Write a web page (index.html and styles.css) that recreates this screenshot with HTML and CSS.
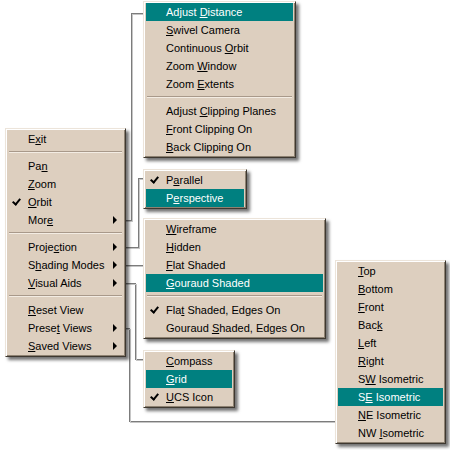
FILE: index.html
```html
<!DOCTYPE html>
<html>
<head>
<meta charset="utf-8">
<link rel="stylesheet" href="styles.css">
</head>
<body>
<div class="canvas">
  <svg class="wires" width="450" height="450" viewBox="0 0 450 450">
    <g class="dark">
      <polyline points="124,220 131,220 131,13 144,13"/>
      <polyline points="124,247 138,247 138,178 144,178"/>
      <polyline points="124,265 144,265"/>
      <polyline points="124,283 135,283 135,359 144,359"/>
      <polyline points="124,328 129,328 129,421 336,421"/>
    </g>
    <g class="light">
      <polyline points="124,221 132,221 132,14 144,14"/>
      <polyline points="124,248 139,248 139,179 144,179"/>
      <polyline points="124,266 144,266"/>
      <polyline points="124,284 136,284 136,360 144,360"/>
      <polyline points="124,329 130,329 130,422 336,422"/>
    </g>
  </svg>

  <div class="menu m-main">
    <div class="item"><span>E<u>x</u>it</span></div>
    <div class="sep"></div>
    <div class="item"><span>Pa<u>n</u></span></div>
    <div class="item"><span><u>Z</u>oom</span></div>
    <div class="item checked"><span><u>O</u>rbit</span></div>
    <div class="item sub"><span>Mor<u>e</u></span></div>
    <div class="sep"></div>
    <div class="item sub"><span>Proje<u>c</u>tion</span></div>
    <div class="item sub"><span>S<u>h</u>ading Modes</span></div>
    <div class="item sub"><span><u>V</u>isual Aids</span></div>
    <div class="sep"></div>
    <div class="item"><span><u>R</u>eset View</span></div>
    <div class="item sub"><span>Prese<u>t</u> Views</span></div>
    <div class="item sub"><span><u>S</u>aved Views</span></div>
  </div>

  <div class="menu m-more">
    <div class="item active"><span>Adjust <u>D</u>istance</span></div>
    <div class="item"><span><u>S</u>wivel Camera</span></div>
    <div class="item"><span>Continuous <u>O</u>rbit</span></div>
    <div class="item"><span>Zoom <u>W</u>indow</span></div>
    <div class="item"><span>Zoom <u>E</u>xtents</span></div>
    <div class="sep"></div>
    <div class="item"><span>Adjust <u>C</u>lipping Planes</span></div>
    <div class="item"><span><u>F</u>ront Clipping On</span></div>
    <div class="item"><span><u>B</u>ack Clipping On</span></div>
  </div>

  <div class="menu m-proj">
    <div class="item checked"><span>P<u>a</u>rallel</span></div>
    <div class="item active"><span>P<u>e</u>rspective</span></div>
  </div>

  <div class="menu m-shade">
    <div class="item"><span><u>W</u>ireframe</span></div>
    <div class="item"><span><u>H</u>idden</span></div>
    <div class="item"><span><u>F</u>lat Shaded</span></div>
    <div class="item active"><span><u>G</u>ouraud Shaded</span></div>
    <div class="sep"></div>
    <div class="item checked"><span>Fla<u>t</u> Shaded, Edges On</span></div>
    <div class="item"><span>Gouraud <u>S</u>haded, Edges On</span></div>
  </div>

  <div class="menu m-aids">
    <div class="item"><span><u>C</u>ompass</span></div>
    <div class="item active"><span><u>G</u>rid</span></div>
    <div class="item checked"><span><u>U</u>CS Icon</span></div>
  </div>

  <div class="menu m-preset">
    <div class="item"><span><u>T</u>op</span></div>
    <div class="item"><span><u>B</u>ottom</span></div>
    <div class="item"><span><u>F</u>ront</span></div>
    <div class="item"><span>Bac<u>k</u></span></div>
    <div class="item"><span><u>L</u>eft</span></div>
    <div class="item"><span><u>R</u>ight</span></div>
    <div class="item"><span>S<u>W</u> Isometric</span></div>
    <div class="item active"><span>S<u>E</u> Isometric</span></div>
    <div class="item"><span><u>N</u>E Isometric</span></div>
    <div class="item"><span>NW <u>I</u>sometric</span></div>
  </div>
</div>
</body>
</html>
```
FILE: styles.css
```css
html, body {
  margin: 0;
  padding: 0;
  background: #ffffff;
}

.canvas {
  position: relative;
  width: 450px;
  height: 450px;
  overflow: hidden;
  font-family: "Liberation Sans", Arial, sans-serif;
  font-size: 11px;
  color: #000;
}

.wires {
  position: absolute;
  left: 0;
  top: 0;
}

.wires polyline {
  fill: none;
  stroke-width: 1;
  shape-rendering: crispEdges;
}

.wires .dark polyline { stroke: #7c7c7c; }
.wires .light polyline { stroke: #c6c6c6; }

.menu {
  position: absolute;
  box-sizing: border-box;
  background: #ddcfbf;
  border: 1px solid;
  border-color: #ece4da #3e3830 #3e3830 #ece4da;
  padding: 1px 2px;
  box-shadow: inset 1px 1px 0 #ffffff, inset -1px -1px 0 #8e8272, 3px 3px 3px rgba(0, 0, 0, 0.55);
}

.m-main   { left: 5px;   top: 128px; width: 121px; }
.m-more   { left: 143px; top: 1px;   width: 153px; }
.m-proj   { left: 143px; top: 169px; width: 104px; }
.m-shade  { left: 143px; top: 218px; width: 183px; }
.m-aids   { left: 143px; top: 350px; width: 92px; }
.m-preset { left: 335px; top: 260px; width: 111px; }

.item {
  position: relative;
  height: 18px;
  line-height: 18px;
  padding-left: 20px;
  white-space: nowrap;
}

.item u {
  text-decoration: underline;
  text-decoration-thickness: 1px;
  text-underline-offset: 1px;
}

.item.active {
  background: #008080;
  color: #ffffff;
}

.item.checked::before {
  content: "";
  position: absolute;
  left: 6px;
  top: 4px;
  width: 3px;
  height: 6px;
  border: solid currentColor;
  border-width: 0 2px 2px 0;
  transform: rotate(40deg);
  transform-origin: center;
}

.item.sub::after {
  content: "";
  position: absolute;
  right: 6px;
  top: 5px;
  border-style: solid;
  border-width: 4px 0 4px 4px;
  border-color: transparent transparent transparent #000;
}

.sep {
  height: 9px;
  position: relative;
}

.sep::before {
  content: "";
  position: absolute;
  left: 1px;
  right: 1px;
  top: 3px;
  height: 1px;
  background: #a8998a;
  border-bottom: 1px solid #f3ece3;
}
```
